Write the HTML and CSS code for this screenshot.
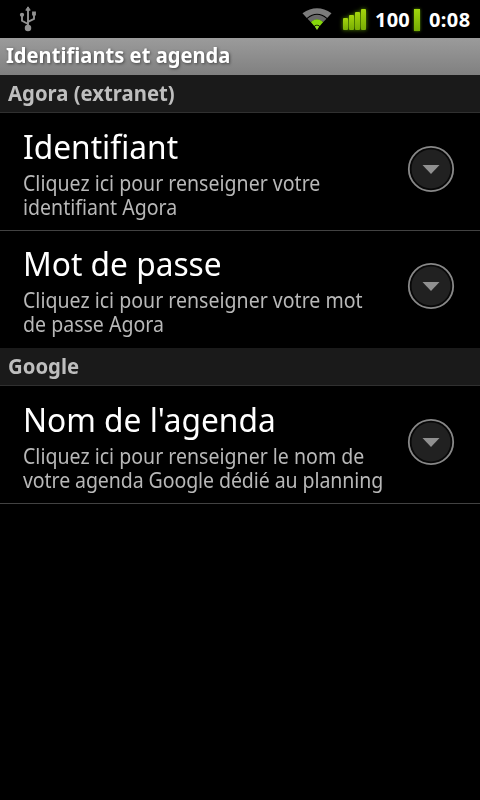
FILE: index.html
```html
<!DOCTYPE html>
<html lang="fr">
<head>
<meta charset="utf-8">
<title>Identifiants et agenda</title>
<link rel="stylesheet" href="styles.css">
</head>
<body>
<header class="status">
  <svg class="usb" width="18" height="26" viewBox="0 0 18 26" fill="#919191" stroke="#919191" stroke-width="1.9">
    <path d="M9 21V4M9 18L3 14.8V10M9 15.8L15 12.8V8" fill="none"/>
    <path d="M9 0.8L11.2 4.2H6.8Z" stroke-width="1"/>
    <circle cx="9" cy="22" r="2.3"/>
    <circle cx="3" cy="8.8" r="1.2"/>
    <path d="M13.8 6.3h2.4v2.4h-2.4z" stroke-width="1.4"/>
  </svg>
  <div class="indicators">
    <svg class="wifi" width="32" height="26" viewBox="0 0 32 26">
      <path d="M1.5 7.3Q16 -2.8 30.5 7.3L26.2 12Q16 3.6 5.8 12Z" fill="#7c7c7c"/>
      <path d="M6.5 12.7Q16 4.8 25.5 12.7L22.3 16.1Q16 10.8 9.7 16.1Z" fill="#686868"/>
      <path d="M9.8 16Q16 10.5 22.2 16L18.8 20Q16 17.6 13.2 20Z" fill="#86d80b"/>
      <path d="M13.7 20.5Q16 18.5 18.3 20.5L16 24Z" fill="#92dc24"/>
    </svg>
    <svg class="signal" width="26" height="26" viewBox="0 0 26 26">
      <defs><linearGradient id="g" x1="0" y1="0" x2="0" y2="1"><stop offset="0" stop-color="#a4d60c"/><stop offset="1" stop-color="#78ad05"/></linearGradient></defs>
      <g fill="url(#g)"><rect x="1" y="12" width="5" height="12" rx="1"/><rect x="7" y="9" width="5" height="15" rx="1"/><rect x="13" y="6" width="5" height="18" rx="1"/><rect x="19" y="3" width="5" height="21" rx="1"/></g>
    </svg>
    <span class="percent">100</span>
    <span class="battery"></span>
    <span class="clock">0:08</span>
  </div>
</header>
<h1 class="title"><span>Identifiants et agenda</span></h1>
<main>
  <h2 class="category"><span>Agora (extranet)</span></h2>
  <section class="row">
    <div class="text">
      <h3>Identifiant</h3>
      <p>Cliquez ici pour renseigner votre<br>identifiant Agora</p>
    </div>
    <svg class="more" width="48" height="48" viewBox="0 0 48 48"><circle cx="24" cy="24" r="22.2" fill="#080808" stroke="#888" stroke-width="1.8"/><circle cx="24" cy="24" r="19.5" fill="#212121"/><path d="M15.5 20h17L24 29z" fill="#909090"/></svg>
  </section>
  <section class="row last">
    <div class="text">
      <h3>Mot de passe</h3>
      <p>Cliquez ici pour renseigner votre mot<br>de passe Agora</p>
    </div>
    <svg class="more" width="48" height="48" viewBox="0 0 48 48"><circle cx="24" cy="24" r="22.2" fill="#080808" stroke="#888" stroke-width="1.8"/><circle cx="24" cy="24" r="19.5" fill="#212121"/><path d="M15.5 20h17L24 29z" fill="#909090"/></svg>
  </section>
  <h2 class="category"><span>Google</span></h2>
  <section class="row">
    <div class="text">
      <h3>Nom de l'agenda</h3>
      <p>Cliquez ici pour renseigner le nom de<br><span class="tight">votre agenda Google dédié au planning</span></p>
    </div>
    <svg class="more" width="48" height="48" viewBox="0 0 48 48"><circle cx="24" cy="24" r="22.2" fill="#080808" stroke="#888" stroke-width="1.8"/><circle cx="24" cy="24" r="19.5" fill="#212121"/><path d="M15.5 20h17L24 29z" fill="#909090"/></svg>
  </section>
</main>
</body>
</html>
```

FILE: styles.css
```css
* { box-sizing: border-box; }
body {
  margin: 0;
  min-height: 800px;
  background: #000;
  color: #fff;
  font-family: "Noto Sans", "Open Sans", sans-serif;
}
h1, h2, h3, p { margin: 0; }
.status {
  height: 38px;
  padding: 6px 9px 0 19px;
  display: flex;
  justify-content: space-between;
  font-size: 20px;
  font-weight: 700;
  line-height: 27px;
}
.indicators { display: flex; }
.wifi { margin-right: 9px; }
.signal { margin-right: 7px; filter: drop-shadow(0 0 2px #5b9300); }
.percent { width: 36px; letter-spacing: .2px; }
.battery {
  width: 6px;
  height: 22px;
  margin: 3px 9px 0 3px;
  background: linear-gradient(#a0d80c, #76ab04);
  box-shadow: 0 0 3px #5b9300;
}
.clock { width: 42px; letter-spacing: .4px; }
.title {
  height: 37px;
  padding-left: 6px;
  background: linear-gradient(#9b9b9b, #808080);
  font-size: 21px;
  line-height: 35px;
  text-shadow: 1px 1px 3px #444;
  white-space: nowrap;
}
.title span, .category span, h3, p {
  display: inline-block;
  transform: scaleX(.96);
  transform-origin: left;
}
.category {
  height: 38px;
  padding-left: 8px;
  background: #1a1a1a;
  border-bottom: 1px solid #303030;
  color: #bebebe;
  font-size: 21px;
  line-height: 37px;
}
.category span { transform: scaleX(.967); }
.row {
  height: 118px;
  padding: 14px 25px 0 23px;
  display: flex;
  justify-content: space-between;
  border-bottom: 1px solid #424242;
}
.row.last { height: 117px; padding-top: 13px; border-bottom: 0; }
.text { width: 370px; white-space: nowrap; }
h3 { display: block; font-size: 33px; font-weight: 400; line-height: 39px; }
p { display: block; margin-top: 5px; color: #b8b8b8; font-size: 21px; line-height: 24px; transform: scaleX(.931); }
.tight { letter-spacing: -.1px; }
.more { flex: none; margin-top: 18px; }
```
